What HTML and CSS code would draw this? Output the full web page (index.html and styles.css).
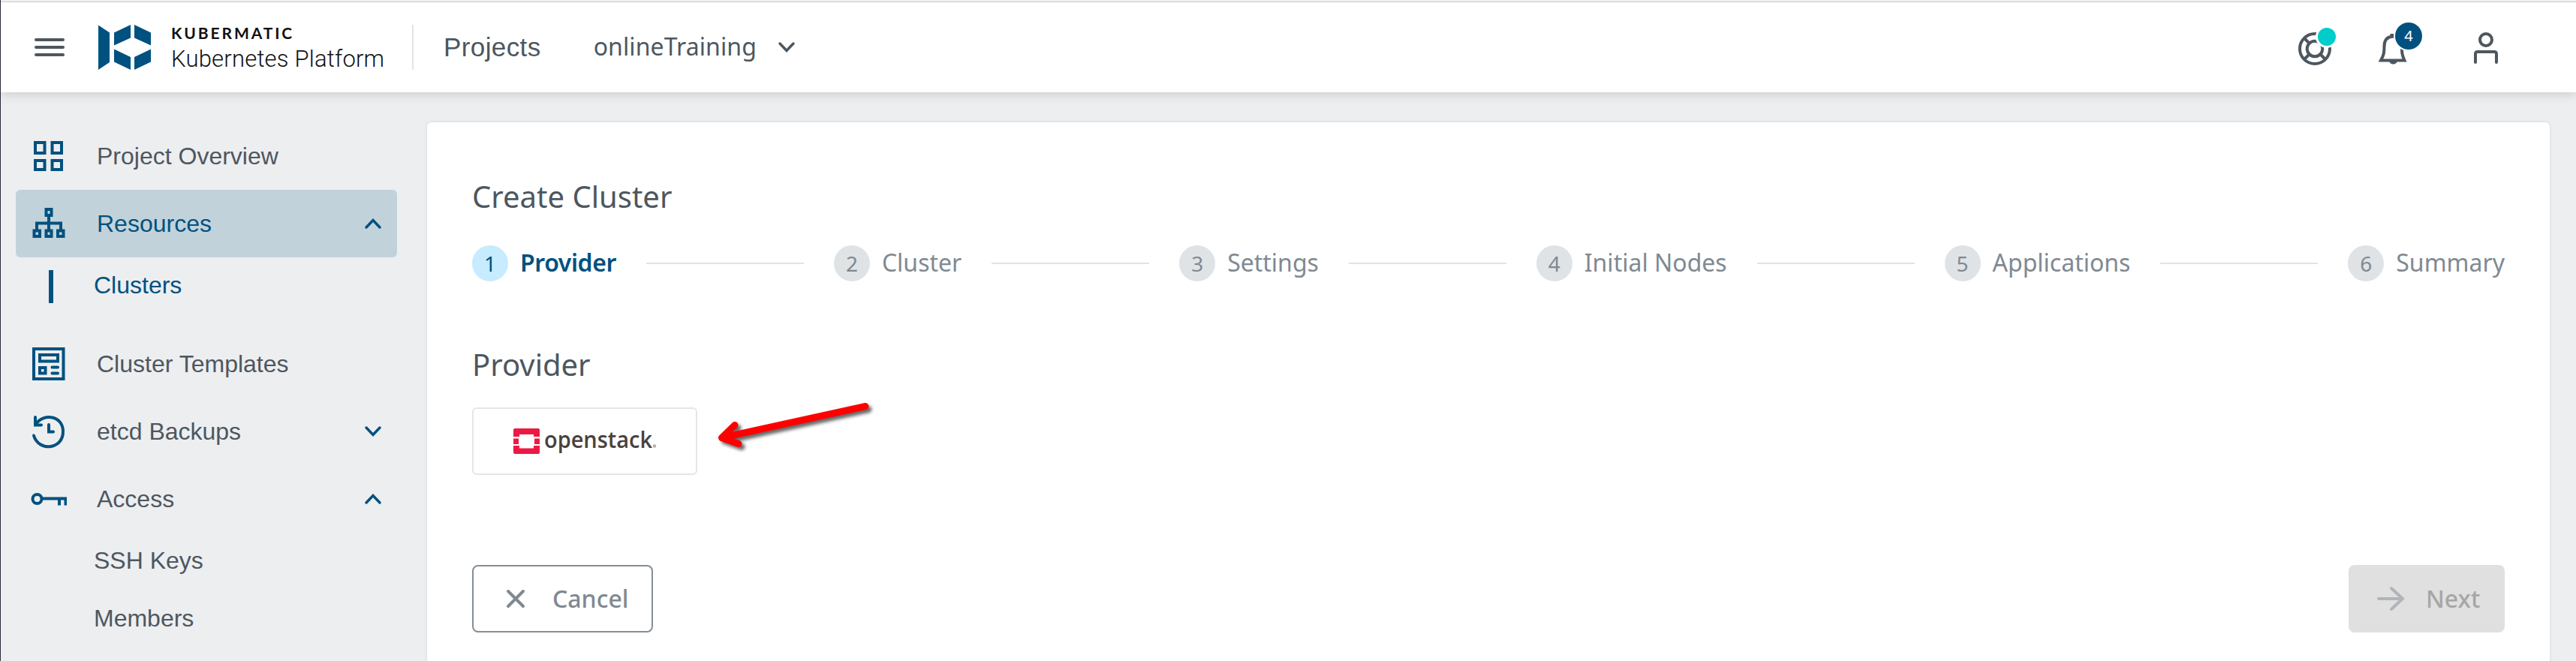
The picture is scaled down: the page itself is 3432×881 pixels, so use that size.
FILE: index.html
```html
<!DOCTYPE html>
<html lang="en">
<head>
<meta charset="utf-8">
<title>Create Cluster</title>
<link rel="stylesheet" href="styles.css">
</head>
<body>
<div class="app">
  <header class="header">
    <svg class="menu" width="42" height="26" viewBox="0 0 42 26"><path d="M3 3H39M3 13H39M3 23H39"/></svg>
    <svg class="logo" width="70" height="60" viewBox="0 0 70 60"><path d="M0 0.500L15 10.500V50L0 60ZM21 10.500L43 0V17.500L21 27.500ZM48 0L70 10.500V27.500L48 17.500ZM21 32.500L43 43V60L21 49.500ZM70 32.500L48 43V60L70 49.500Z"/></svg>
    <div class="brand"><span class="brand-top">KUBERMATIC</span><span class="brand-sub">Kubernetes Platform</span></div>
    <div class="divider"></div>
    <span class="projects">Projects</span>
    <span class="project-name">onlineTraining</span>
    <svg class="chev gray head-chev" width="24" height="16" viewBox="0 0 24 16"><path d="M3 3L12 12.500L21 3"/></svg>
    <div class="tools">
      <svg class="tool" width="60" height="60" viewBox="0 0 60 60">
        <g class="line"><circle cx="30" cy="34" r="20"/><circle cx="30" cy="34" r="10.300"/><path d="M16 20L23 27M44 48L37 41M16 48L23 41M44 20L37 27"/></g>
        <circle cx="46" cy="18" r="15" fill="#fff"/><circle cx="46" cy="18" r="12" fill="#00cccc"/>
      </svg>
      <div class="bell tool">
        <svg width="60" height="60" viewBox="0 0 60 60"><path class="line miter" d="M13 49.500C17 42 17.500 39 17.500 31C17.500 23 21 18 29 17.500C37 18 41 23 41 31C41 39 41 42 44.500 49.500Z"/><path class="ink" d="M25.500 18V14H33V18ZM24.500 50H34.500C35 56 24 56 24.500 50Z"/><circle cx="50" cy="17" r="20" fill="#fff"/></svg>
        <span class="badge">4</span>
      </div>
      <svg class="tool" width="60" height="60" viewBox="0 0 60 60"><g class="line round"><circle cx="30" cy="22" r="8"/><path d="M16 52V41Q16 38 19 38H41Q44 38 44 41V52"/></g></svg>
    </div>
  </header>
  <div class="body">
    <nav class="side">
      <a class="item"><svg width="48" height="48" viewBox="0 0 48 48"><path d="M6 6H18.500V20H6ZM28.500 6H41V20H28.500ZM6 30H18.500V42H6ZM28.500 30H41V42H28.500Z"/></svg><span>Project Overview</span></a>
      <a class="item active"><svg width="48" height="48" viewBox="0 0 48 48"><path d="M20.500 5H27.500V13H20.500ZM4.500 33.500H12V41H4.500ZM20.500 33.500H27.500V41H20.500ZM36 33.500H43.500V41H36ZM24 13V33M8 33V23.500H40V33"/></svg><span>Resources</span><svg class="chev" width="24" height="16" viewBox="0 0 24 16"><path d="M3 13L12 3.500L21 13"/></svg></a>
      <a class="sub current"><span>Clusters</span></a>
      <a class="item gap"><svg width="48" height="48" viewBox="0 0 48 48"><path d="M4 4H43.500V44H4ZM12 12H36V20.500H12ZM12 29H19.500V36.500H12ZM28.500 28.500H36M28.500 36.500H36" stroke-linecap="round"/></svg><span>Cluster Templates</span></a>
      <a class="item"><svg width="48" height="48" viewBox="0 0 48 48"><path d="M6 5V15.500H14M7 14C17 -1 43 3 43 24C43 49 10 51 4 29.500M24 15V24.500H30" stroke-linecap="round"/></svg><span>etcd Backups</span><svg class="chev" width="24" height="16" viewBox="0 0 24 16"><path d="M3 3L12 12.500L21 3"/></svg></a>
      <a class="item"><svg width="48" height="48" viewBox="0 0 48 48"><circle cx="8.500" cy="24" r="6"/><path d="M15 23.500H46.500V32.500M38 23.500V32.500"/></svg><span>Access</span><svg class="chev" width="24" height="16" viewBox="0 0 24 16"><path d="M3 13L12 3.500L21 13"/></svg></a>
      <a class="sub"><span>SSH Keys</span></a>
      <a class="sub"><span>Members</span></a>
    </nav>
    <main class="card">
      <h1>Create Cluster</h1>
      <div class="steps">
        <div class="step on"><i>1</i><span>Provider</span></div><hr>
        <div class="step"><i>2</i><span>Cluster</span></div><hr>
        <div class="step"><i>3</i><span>Settings</span></div><hr>
        <div class="step"><i>4</i><span>Initial Nodes</span></div><hr>
        <div class="step"><i>5</i><span>Applications</span></div><hr>
        <div class="step"><i>6</i><span>Summary</span></div>
      </div>
      <h2>Provider</h2>
      <div class="choice">
        <div class="provider">
          <svg class="os-logo" width="220" height="50" viewBox="0 0 220 50">
            <path fill="#ed1944" d="M2 0H33Q35 0 35 2V11H27V8H8V11H0V2Q0 0 2 0ZM0 13.500H7V21H0ZM28 13.500H35V21H28ZM0 23H8V26.500H27V23H35V32Q35 34 33 34H2Q0 34 0 32Z"/>
            <text class="os" x="41" y="25.500" textLength="144" lengthAdjust="spacingAndGlyphs">openstack</text>
            <circle cx="188" cy="23.500" r="2.200" fill="#b5b1af"/>
          </svg>
        </div>
        <svg class="arrow" width="220" height="76" viewBox="0 0 220 76"><path d="M206 12.500L14.500 54.500M32 37.500L14.500 54.500L37 62.500"/></svg>
      </div>
      <div class="actions">
        <button class="btn cancel"><svg width="26" height="26" viewBox="0 0 26 26"><path d="M3 3L23 23M23 3L3 23"/></svg><span>Cancel</span></button>
        <button class="btn next"><svg width="38" height="34" viewBox="0 0 38 34"><path d="M3 17H35M20 3L35 17L20 31"/></svg><span>Next</span></button>
      </div>
    </main>
  </div>
</div>
</body>
</html>
```
FILE: styles.css
```css
* { box-sizing: border-box; }
body { margin: 0; background: #edeef0; color: #4d575f; font-family: "Noto Sans", sans-serif; }
svg { display: block; flex: none; fill: none; }
.app { width: 3432px; height: 881px; overflow: hidden; border-left: 1px solid #2b2a3a; }
.header { display: flex; align-items: center; height: 123px; padding: 3px 0 0 44px; background: linear-gradient(#f0f1f3 2px, #c6cbcf 2px, #c6cbcf 3px, #fff 3px); box-shadow: 0 2px 14px rgba(0,0,0,.16); position: relative; }
.menu path { stroke: #4d575f; stroke-width: 4; stroke-linecap: round; }
.logo { margin-left: 44px; fill: #00517f; }
.brand { display: flex; flex-direction: column; margin-left: 27px; padding-top: 2px; width: 322px; color: #111; white-space: nowrap; }
.brand-top { font: 700 21px/24px Lato, sans-serif; letter-spacing: 2.9px; }
.brand-sub { font: 300 31px/36px Roboto, sans-serif; letter-spacing: .2px; margin-top: 5px; }
.divider { width: 2px; height: 60px; background: #e0e4e6; margin-left: -1px; }
.projects { font: 35px/40px "Liberation Sans", sans-serif; letter-spacing: .4px; margin-left: 40px; }
.project-name { font-size: 32px; line-height: 40px; letter-spacing: .1px; margin-left: 70px; padding-bottom: 2px; }
.chev path { stroke: #00517f; stroke-width: 3.500; stroke-linecap: round; }
.chev.gray path { stroke: #4d575f; }
.head-chev { margin-left: 28px; }
.tools { display: flex; margin-left: auto; margin-right: 90px; }
.tool { margin-right: 45px; position: relative; top: -2px; }
.tool + .tool { margin-left: 0; }
.tool:last-child { margin: 0 0 0 18px; }
.line { stroke: #4d575f; stroke-width: 4; }
.round { stroke-linecap: round; }
.ink { fill: #4d575f; }
.badge { position: absolute; left: 32px; top: -1px; width: 36px; height: 36px; border-radius: 50%; background: #00517f; color: #fff; font: 20px/36px "Noto Sans", sans-serif; text-align: center; }
.body { display: flex; align-items: stretch; }
.side { width: 568px; padding: 40px 40px 0 20px; font: 32px/38px "Liberation Sans", sans-serif; }
.item { display: flex; align-items: center; height: 90px; padding: 0 20px 0 20px; border-radius: 6px; }
.item > svg:first-child { stroke: #00517f; stroke-width: 4; margin-right: 40px; }
.item span { padding-bottom: 1px; }
.item .chev { margin-left: auto; }
.active { background: #c2d2da; color: #00517f; }
.sub { display: flex; align-items: center; height: 77px; padding-left: 104px; }
.sub span { padding-bottom: 3px; }
.current { color: #00517f; padding-left: 44px; }
.current::before { content: ""; width: 6px; height: 44px; background: #00517f; margin-right: 54px; }
.gap { margin-top: 20px; }
.card { width: 2828px; height: 740px; margin-top: 40px; padding: 72px 60px 0; background: #fff; border-radius: 6px; box-shadow: 0 0 4px rgba(0,0,0,.1); }
h1, h2 { margin: 0; font-size: 40px; line-height: 54px; font-weight: 400; }
.steps { display: flex; align-items: center; justify-content: space-between; height: 48px; margin-top: 38px; }
.step { display: flex; align-items: center; gap: 16px; color: #7f8992; font-size: 32px; line-height: 40px; }
.step span { padding-bottom: 2px; }
.step i { width: 48px; height: 48px; border-radius: 50%; background: #dfe3e6; font-style: normal; font-size: 28px; line-height: 48px; text-align: center; }
.on span { color: #00517f; font-weight: 600; letter-spacing: -.4px; }
.on i { background: #c7ebff; color: #00517f; }
hr { width: 210px; height: 2px; border: 0; margin: 0; background: #dfe4e6; }
h2 { margin-top: 84px; }
.choice { display: flex; margin-top: 30px; height: 90px; }
.provider { width: 300px; height: 90px; padding: 26px 0 0 53px; border: 2px solid #e3e6e8; border-radius: 6px; }
.os-logo { overflow: visible; }
.os { font: 600 31px "Open Sans", sans-serif; fill: #4b413c; }
.arrow { margin: -14px 0 0 18px; overflow: visible; filter: drop-shadow(4px 4px 2px rgba(0,0,0,.6)); }
.arrow path { stroke: #f00; stroke-width: 9; stroke-linecap: round; stroke-linejoin: round; }
.actions { display: flex; justify-content: space-between; margin-top: 120px; }
.btn { display: flex; align-items: center; height: 90px; border: 0; border-radius: 8px; font: 500 32px/40px "Noto Sans", sans-serif; }
.btn path { stroke-width: 4; stroke-linecap: round; }
.cancel { width: 241px; padding: 0 0 0 43px; gap: 36px; background: #fff; border: 2px solid #848e96; color: #7f8992; }
.cancel path { stroke: #7f8992; }
.next { width: 208px; padding: 0 0 0 37px; gap: 28px; background: #e0e0e0; color: #a6a6a6; }
.next path { stroke: #b1b5b9; }
```
